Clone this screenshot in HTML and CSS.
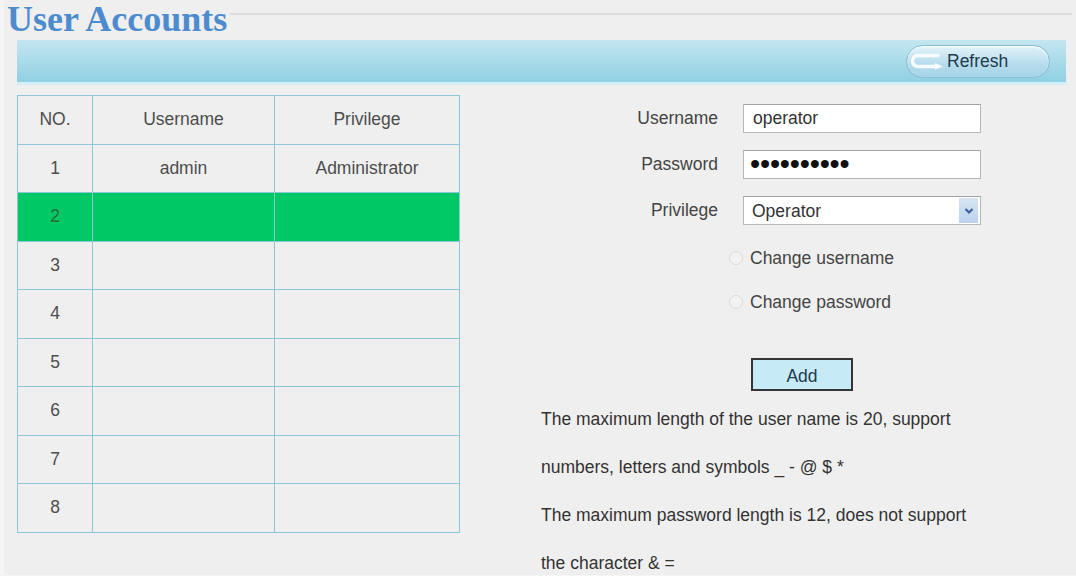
FILE: index.html
```html
<!DOCTYPE html>
<html lang="en">
<head>
    <meta charset="UTF-8">
    <meta name="viewport" content="width=device-width, initial-scale=1.0">
    <title>User Accounts</title>

    <link rel="stylesheet" href="styles.css">
</head>
<body>
    <div class="panel">
        <div class="header">
            <h1 class="title">User Accounts</h1>
            <div class="title-line"></div>
        </div>

        <div class="toolbar">
            <button class="refresh-btn">
                <svg class="refresh-icon" width="36" height="18" viewBox="0 0 36 18">
                    <path d="M30 3.5 H10 A5.5 5.5 0 0 0 10 14.5 H28" fill="none" stroke="#f6fcff" stroke-width="3.5" stroke-linecap="round"/>
                    <path d="M27 11 L35 14.5 L27 17.5 Z" fill="#f6fcff"/>
                </svg>
                <span>Refresh</span>
            </button>
        </div>

        <div class="content">
            <table class="user-table">
                <tr><th class="col-no">NO.</th><th class="col-name">Username</th><th>Privilege</th></tr>
                <tr><td>1</td><td>admin</td><td>Administrator</td></tr>
                <tr class="selected"><td>2</td><td></td><td></td></tr>
                <tr><td>3</td><td></td><td></td></tr>
                <tr><td>4</td><td></td><td></td></tr>
                <tr><td>5</td><td></td><td></td></tr>
                <tr><td>6</td><td></td><td></td></tr>
                <tr><td>7</td><td></td><td></td></tr>
                <tr><td>8</td><td></td><td></td></tr>
            </table>

            <div class="account-form">
                <div class="form-grid">
                    <label for="username">Username</label>
                    <input type="text" id="username" class="field" value="operator">

                    <label for="password">Password</label>
                    <input type="password" id="password" class="field password" value="1234567890">

                    <label for="privilege">Privilege</label>
                    <div class="select-wrap">
                        <select id="privilege" class="field">
                            <option>Operator</option>
                            <option>Visitor</option>
                            <option>Administrator</option>
                        </select>
                        <span class="select-arrow">
                            <svg width="10" height="8" viewBox="0 0 10 8">
                                <path d="M1.5 2 L5 5.5 L8.5 2" fill="none" stroke="#3d62a0" stroke-width="2.2"/>
                            </svg>
                        </span>
                    </div>
                </div>

                <div class="options">
                    <label class="option"><input type="radio" name="change"> Change username</label>
                    <label class="option"><input type="radio" name="change"> Change password</label>
                </div>

                <div class="actions">
                    <button class="add-btn">Add</button>
                </div>

                <div class="notes">
                    <p>The maximum length of the user name is 20, support<br>numbers, letters and symbols _ - @ $ *</p>
                    <p>The maximum password length is 12, does not support<br>the character &amp; =</p>
                </div>
            </div>
        </div>
    </div>
</body>
</html>
```

FILE: styles.css
```css
body {
    margin: 0;
    background-color: #f5f5f5;
    font-family: "Liberation Sans", Arial, sans-serif;
    color: #444;
}
.panel {
    margin-left: 4px;
    height: 575px;
    background-color: #efefef;
    padding: 0 10px 0 13px;
    box-sizing: border-box;
}
.header {
    display: flex;
    height: 38px;
    margin-left: -10px;
    margin-right: -6px;
}
.title {
    margin: 0;
    font-family: "Liberation Serif", "Times New Roman", serif;
    font-size: 36px;
    line-height: 38px;
    font-weight: bold;
    color: #4d8bcf;
}
.title-line {
    flex: 1;
    margin-top: 13px;
    margin-left: 3px;
    height: 0;
    border-top: 2px solid #dcdcdc;
}
.toolbar {
    margin-top: 2px;
    height: 42px;
    display: flex;
    align-items: center;
    justify-content: flex-end;
    padding-right: 16px;
    background: linear-gradient(#c4e6f0, #8fd0e3);
    border-bottom: 3px solid #d6eef5;
}
.refresh-btn {
    display: flex;
    align-items: center;
    width: 144px;
    height: 33px;
    padding: 0 0 0 1px;
    border: 1px solid #86bcd2;
    border-radius: 17px;
    background: linear-gradient(#e2f3fa, #b5dcec 60%, #a6d4e8);
    box-shadow: inset 0 1px 2px #ffffff;
    font-family: inherit;
    font-size: 17.5px;
    color: #1f3b4d;
    cursor: pointer;
}
.refresh-icon {
    margin-right: 3px;
}
.content {
    display: flex;
    align-items: flex-start;
    margin-top: 10px;
}
.user-table {
    width: 443px;
    border-collapse: collapse;
    font-size: 17.5px;
    color: #4d4d4d;
}
.user-table tr {
    height: 48.5px;
}
.user-table th,
.user-table td {
    border: 1px solid #8cc6d7;
    text-align: center;
    font-weight: normal;
    padding: 0;
}
.col-no {
    width: 74px;
}
.col-name {
    width: 181px;
}
.user-table .selected {
    background-color: #00c864;
    color: #256b3a;
}
.account-form {
    margin-left: 11px;
}
.form-grid {
    display: grid;
    grid-template-columns: 247px 238px;
    column-gap: 25px;
    row-gap: 17px;
    align-items: center;
    margin-top: 9px;
    font-size: 17.5px;
}
.form-grid label {
    text-align: right;
    color: #444;
}
.field {
    box-sizing: border-box;
    width: 238px;
    height: 29px;
    margin: 0;
    padding: 0 9px;
    border: 1px solid #b4b8bc;
    border-top-color: #9fa4a8;
    background-color: #fff;
    font-family: inherit;
    font-size: 17.5px;
    color: #333;
}
.password {
    padding-left: 6px;
    font-size: 29px;
    letter-spacing: -0.2px;
    color: #111;
}
.select-wrap {
    position: relative;
    width: 238px;
}
.select-wrap select {
    appearance: none;
    -webkit-appearance: none;
    padding-left: 8px;
    border-radius: 0;
}
.select-arrow {
    position: absolute;
    top: 2px;
    right: 3px;
    width: 19px;
    height: 25px;
    display: flex;
    align-items: center;
    justify-content: center;
    background: linear-gradient(#d6e4f5, #bcd2ee);
    pointer-events: none;
}
.options {
    margin-top: 11px;
    padding-left: 258px;
    font-size: 17.5px;
}
.option {
    display: flex;
    align-items: center;
    height: 44px;
    color: #444;
}
.option input {
    appearance: none;
    -webkit-appearance: none;
    width: 14px;
    height: 14px;
    margin: 0 7px 0 0;
    border: 1px solid #dcdcdc;
    border-radius: 50%;
    background-color: #f2f2f2;
}
.actions {
    margin-top: 34px;
    padding-left: 280px;
}
.add-btn {
    width: 102px;
    height: 33px;
    padding: 4px 0 0;
    border: 2px solid #353535;
    background-color: #c6eaf6;
    font-family: inherit;
    font-size: 17.5px;
    color: #1d3c4d;
    cursor: pointer;
}
.notes {
    margin-top: 4px;
    padding-left: 70px;
    font-size: 17.5px;
    line-height: 48px;
    color: #333;
}
.notes p {
    margin: 0;
    white-space: nowrap;
}
```
